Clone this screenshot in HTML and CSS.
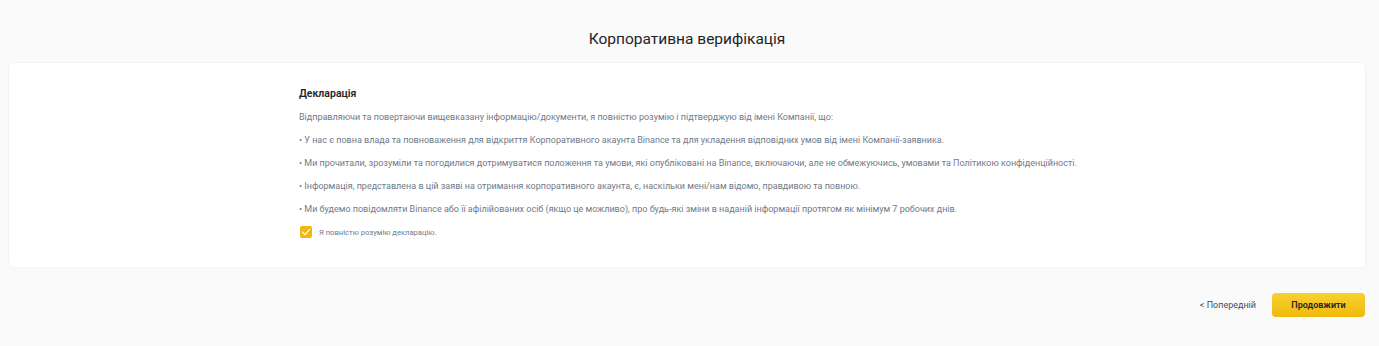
FILE: index.html
```html
<!doctype html>
<html lang="uk">

<head>
  <meta charset="UTF-8" />
  <title>Корпоративна верифікація</title>
  <link rel="stylesheet" href="styles.css">
</head>

<body>
  <h1 class="page-title">Корпоративна верифікація</h1>

  <div class="card">
    <div class="declaration">
      <h2>Декларація</h2>
      <p>Відправляючи та повертаючи вищевказану інформацію/документи, я повністю розумію і підтверджую від імені Компанії, що:</p>
      <p>• У нас є повна влада та повноваження для відкриття Корпоративного акаунта Binance та для укладення відповідних умов від імені Компанії-заявника.</p>
      <p>• Ми прочитали, зрозуміли та погодилися дотримуватися положення та умови, які опубліковані на Binance, включаючи, але не обмежуючись, умовами та Політикою конфіденційності.</p>
      <p>• Інформація, представлена в цій заяві на отримання корпоративного акаунта, є, наскільки мені/нам відомо, правдивою та повною.</p>
      <p>• Ми будемо повідомляти Binance або її афілійованих осіб (якщо це можливо), про будь-які зміни в наданій інформації протягом як мінімум 7 робочих днів.</p>

      <label class="agree">
        <span class="check">
          <svg width="10" height="10" viewBox="0 0 10 10">
            <path d="M1.5 5.2 L4 7.6 L8.6 2.4" fill="none" stroke="#fff" stroke-width="1.3" stroke-linecap="round" stroke-linejoin="round" />
          </svg>
        </span>
        Я повністю розумію декларацію.
      </label>
    </div>
  </div>

  <div class="actions">
    <button class="prev" type="button">&lt; Попередній</button>
    <button class="next" type="button">Продовжити</button>
  </div>
</body>

</html>
```

FILE: styles.css
```css
body {
  font-family: "Roboto", "Noto Sans", sans-serif;
  background: #fafafa;
  color: #1e2329;
  margin: 0;
  padding: 0 14px 0 9px;
}

.page-title {
  margin: 0;
  padding-top: 28px;
  height: 35px;
  font-size: 15.5px;
  font-weight: 400;
  line-height: 22px;
  text-align: center;
  color: #1e2329;
}

.card {
  background: #fff;
  border-radius: 4px;
  box-shadow: 0 0 3px rgba(0, 0, 0, 0.06);
  padding: 22px 0 26px;
}

.declaration {
  max-width: 776px;
  margin: 0 auto;
}

.declaration h2 {
  margin: 0 0 5px;
  font-size: 10.5px;
  font-weight: 600;
  line-height: 18px;
}

.declaration p {
  margin: 0 0 5px;
  font-size: 9px;
  line-height: 18px;
  color: #707a8a;
  white-space: nowrap;
}

.agree {
  display: flex;
  align-items: center;
  gap: 7px;
  margin-top: 5px;
  padding-left: 1px;
  height: 18px;
  font-size: 7.6px;
  color: #707a8a;
}

.check {
  width: 12px;
  height: 12px;
  border-radius: 2px;
  background: #f0b90b;
  display: flex;
  align-items: center;
  justify-content: center;
}

.actions {
  display: flex;
  justify-content: flex-end;
  align-items: center;
  gap: 16px;
  margin-top: 26px;
}

.prev {
  background: none;
  border: none;
  padding: 0;
  font-family: inherit;
  font-size: 9px;
  color: #474d57;
  cursor: pointer;
}

.next {
  width: 93px;
  height: 24px;
  border: none;
  border-radius: 4px;
  background: linear-gradient(180deg, #f8d12f 0%, #f0b90b 100%);
  font-family: inherit;
  font-size: 9px;
  font-weight: 600;
  color: #1e2329;
  cursor: pointer;
}
```
